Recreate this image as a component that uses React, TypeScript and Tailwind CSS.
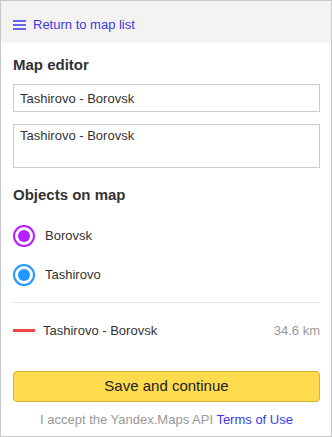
const Radio = ({ color }: { color: string }) => (
  <svg width="22" height="22" viewBox="0 0 22 22" className="shrink-0">
    <circle cx="11" cy="11" r="10" fill="white" stroke={color} strokeWidth="2" />
    <circle cx="11" cy="11" r="6" fill={color} />
  </svg>
);

const objects = [
  { name: "Borovsk", color: "#b51eff" },
  { name: "Tashirovo", color: "#1e98ff" },
];

export default function App() {
  return (
    <div className="w-[332px] h-[437px] border border-[#c8c8c8] bg-white text-[#333] font-['Liberation_Sans',Arial,sans-serif] flex flex-col">
      <div className="h-[42px] shrink-0 bg-[#f4f3f1] flex items-center px-3 pt-[5px] gap-[7px]">
        <svg width="13" height="10" viewBox="0 0 13 10" className="text-[#3a3ae6]">
          <path d="M0 1h13M0 5h13M0 9h13" stroke="currentColor" strokeWidth="1.3" />
        </svg>
        <span className="text-[13px] text-[#3a3ae6]">Return to map list</span>
      </div>

      <div className="pl-3 pr-[11px] flex flex-col">
        <h1 className="mt-[12px] text-[15px] leading-5 font-bold">Map editor</h1>
        <input
          readOnly
          value="Tashirovo - Borovsk"
          className="mt-[9px] h-[28px] border border-[#ccc] px-[6px] text-[13px] outline-none"
        />
        <textarea
          readOnly
          value="Tashirovo - Borovsk"
          className="mt-[12px] h-[44px] border border-[#ccc] px-[6px] py-[3px] text-[13px] leading-4 resize-none outline-none"
        />

        <h2 className="mt-[17px] text-[15px] leading-5 font-bold">Objects on map</h2>
        <div className="mt-[11px] flex flex-col">
          {objects.map((o) => (
            <div key={o.name} className="h-[39px] flex items-center gap-[10px]">
              <Radio color={o.color} />
              <span className="text-[13px]">{o.name}</span>
            </div>
          ))}
        </div>

        <div className="mt-[8px] h-px bg-[#e6e6e6]" />

        <div className="h-[55px] flex items-center text-[13px]">
          <div className="w-[22px] h-[3px] bg-[#ed4543]" />
          <span className="ml-[8px]">Tashirovo - Borovsk</span>
          <span className="ml-auto text-[#999]">34.6 km</span>
        </div>

        <button className="mt-[13px] h-[31px] rounded-[4px] border border-[#d6b02e] bg-[#ffdb4d] text-[15px] text-[#222]">
          Save and continue
        </button>
        <p className="mt-[8px] text-center text-[13px] text-[#999]">
          I accept the Yandex.Maps API <span className="text-[#3a3ae6]">Terms of Use</span>
        </p>
      </div>
    </div>
  );
}
